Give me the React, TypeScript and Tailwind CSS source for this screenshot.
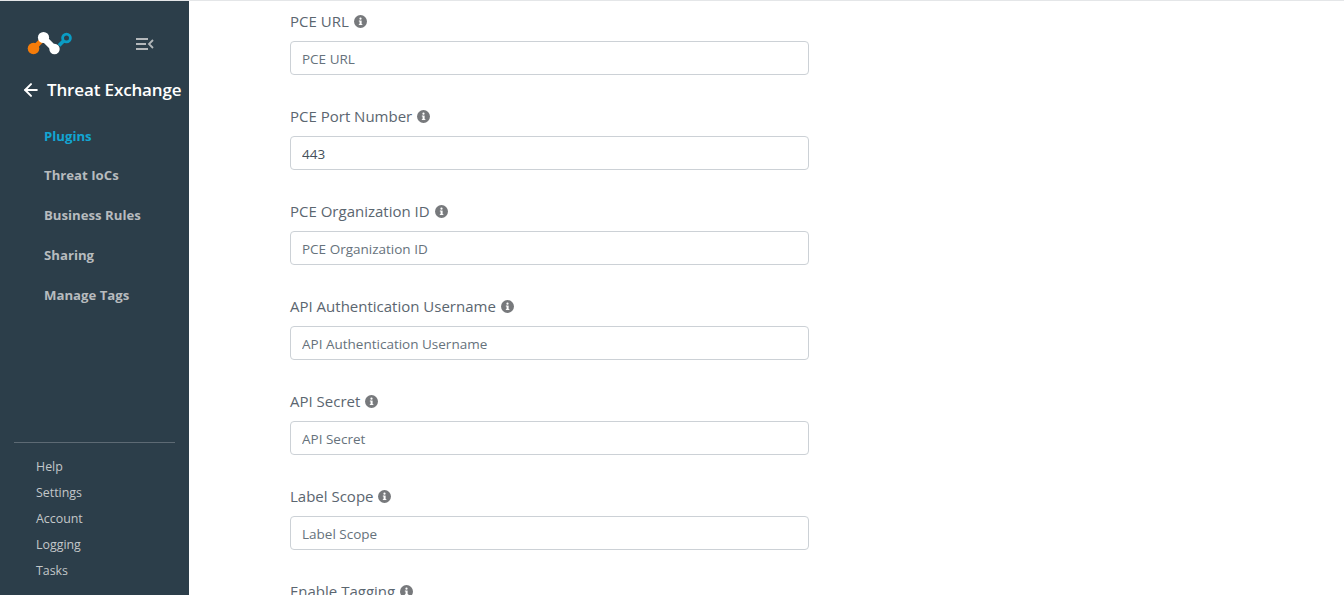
import React from 'react';
import { ArrowLeft } from 'lucide-react';

const mainNav = ['Plugins', 'Threat IoCs', 'Business Rules', 'Sharing', 'Manage Tags'];
const bottomNav = ['Help', 'Settings', 'Account', 'Logging', 'Tasks'];

const fields = [
  { label: 'PCE URL', placeholder: 'PCE URL' },
  { label: 'PCE Port Number', placeholder: 'PCE Port Number', value: '443' },
  { label: 'PCE Organization ID', placeholder: 'PCE Organization ID' },
  { label: 'API Authentication Username', placeholder: 'API Authentication Username' },
  { label: 'API Secret', placeholder: 'API Secret' },
  { label: 'Label Scope', placeholder: 'Label Scope' },
];

const InfoIcon: React.FC = () => (
  <svg width="13" height="13" viewBox="0 0 14 14" className="mt-[1px] shrink-0">
    <circle cx="7" cy="7" r="7" fill="#77797c" />
    <rect x="6" y="6" width="2.2" height="4.6" fill="#fff" />
    <rect x="5.2" y="6" width="1.2" height="1" fill="#fff" />
    <rect x="5.2" y="9.8" width="3.8" height="1" fill="#fff" />
    <circle cx="7" cy="4" r="1.2" fill="#fff" />
  </svg>
);

const Logo: React.FC = () => (
  <svg width="46" height="26" viewBox="0 0 46 26">
    <path d="M7 18 L15 10" stroke="#f57c0a" strokeWidth="5" />
    <circle cx="6.5" cy="18.5" r="5.8" fill="#f57c0a" />
    <path d="M16.5 8 L27.5 19" stroke="#fff" strokeWidth="6.5" />
    <circle cx="16.5" cy="7.5" r="5.6" fill="#fff" />
    <circle cx="27.5" cy="19" r="5.2" fill="#fff" />
    <path d="M32 15.5 L37 10.5" stroke="#0a9cc4" strokeWidth="3.8" />
    <circle cx="39.5" cy="8" r="3.9" fill="none" stroke="#0a9cc4" strokeWidth="2.8" />
  </svg>
);

const CollapseIcon: React.FC = () => (
  <svg width="18" height="14" viewBox="0 0 18 14">
    <path d="M0 2h12M0 7h10M0 12h12" stroke="#b4b8bb" strokeWidth="2.2" />
    <path d="M17 3l-4 4 4 4" stroke="#b4b8bb" strokeWidth="1.8" fill="none" />
  </svg>
);

const App: React.FC = () => {
  return (
    <div className="flex h-[595px] overflow-hidden bg-white font-['Open_Sans','Noto_Sans',sans-serif]">
      <aside className="flex w-[189px] shrink-0 flex-col border-t border-[#e4e6e8] bg-[#2c3e4a]">
        <div className="flex h-[55px] items-end pl-[27px]">
          <Logo />
          <div className="mb-[5px] ml-[63px]">
            <CollapseIcon />
          </div>
        </div>
        <div className="mt-[21px] flex h-[26px] items-center pl-[21px] text-[17px] font-semibold whitespace-nowrap text-white">
          <ArrowLeft size={20} strokeWidth={2.4} className="mr-[6px]" />
          <span className="tracking-[-0.14px]">Threat Exchange</span>
        </div>
        <nav className="mt-[13.6px] flex flex-col pl-[44px]">
          {mainNav.map((item, i) => (
            <a
              key={item}
              className={`flex h-[39.8px] items-center text-[13.2px] font-bold ${i === 0 ? 'text-[#12a5d2]' : 'text-[#b7bbbe]'}`}
            >
              {item}
            </a>
          ))}
        </nav>
        <div className="mx-[14px] mt-auto border-t border-[#5d6a74] pt-[11px] pb-[11px] pl-[22px]">
          {bottomNav.map((item) => (
            <a key={item} className="flex h-[26px] items-center text-[12.4px] text-[#c3c7c9]">
              {item}
            </a>
          ))}
        </div>
      </aside>
      <main className="flex-1 border-t border-[#e4e6e8] pt-[10px] pl-[101px]">
        <form className="w-[519px]">
          {fields.map((field) => (
            <div key={field.label} className="mb-[31px]">
              <label className="mb-[10px] flex h-[20px] items-center gap-[5px] text-[15px] text-[#5b6670]">
                {field.label}
                <InfoIcon />
              </label>
              <input
                className="block h-[34px] w-full rounded-[4px] border border-[#ccd1d6] px-[11px] pt-[2px] text-[13.5px] text-[#45505a] placeholder:text-[#66727c]"
                placeholder={field.placeholder}
                defaultValue={field.value}
              />
            </div>
          ))}
          <label className="flex h-[20px] items-center gap-[5px] text-[15px] text-[#5b6670]">
            Enable Tagging
            <InfoIcon />
          </label>
        </form>
      </main>
    </div>
  );
};

export default App;
